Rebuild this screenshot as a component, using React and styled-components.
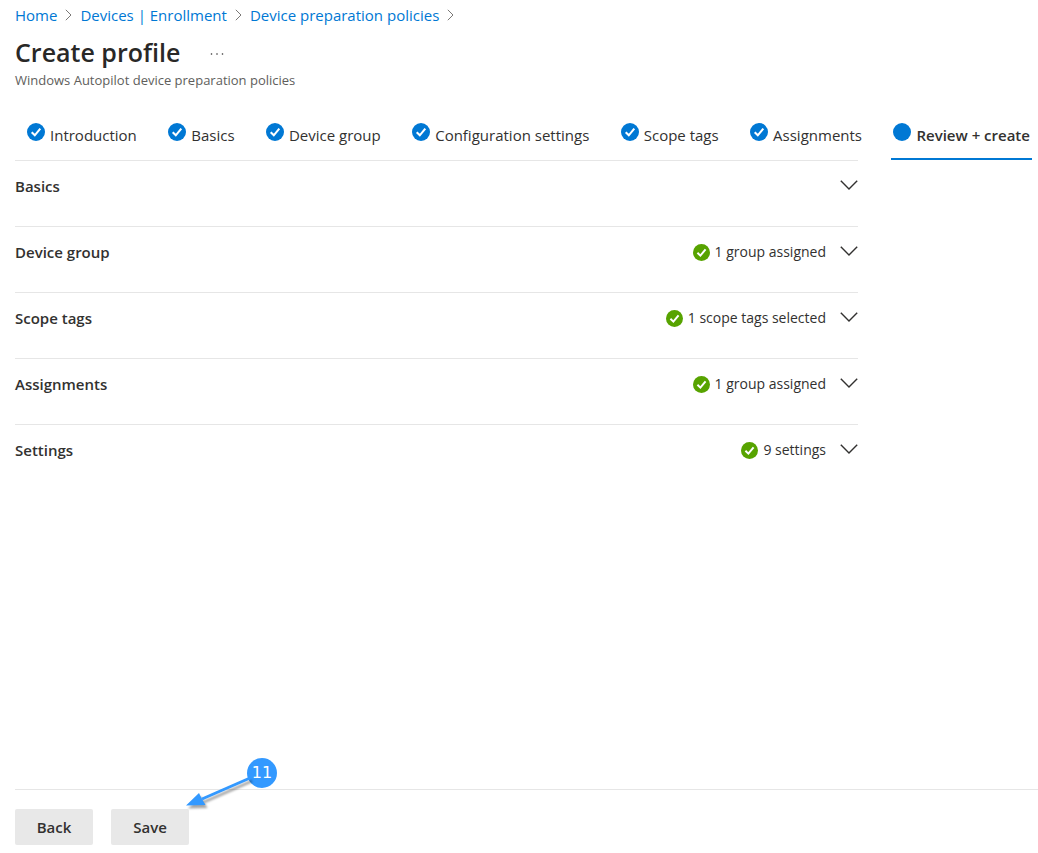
import { useState } from 'react';
import styled, { createGlobalStyle } from 'styled-components';

const crumbs = ['Home', 'Devices | Enrollment', 'Device preparation policies']

const steps = [
    'Introduction',
    'Basics',
    'Device group',
    'Configuration settings',
    'Scope tags',
    'Assignments',
    'Review + create',
]

const summary = [
    { title: 'Basics' },
    { title: 'Device group', status: '1 group assigned' },
    { title: 'Scope tags', status: '1 scope tags selected' },
    { title: 'Assignments', status: '1 group assigned' },
    { title: 'Settings', status: '9 settings' },
]

const CheckCircle = ({ color, size, checked = true }) => (
    <Icon width={size} height={size} viewBox="0 0 18 18" aria-hidden="true">
        <circle cx="9" cy="9" r="9" fill={color} />
        {checked && <path d="M4.7 9.3 L7.8 12.3 L13.3 5.6" fill="none" stroke="#fff" strokeWidth="2.1" />}
    </Icon>
)

const App = () => {
    const [step, setStep] = useState(steps.length - 1)
    const [opened, setOpened] = useState('')

    const toggle = (title) => {
        setOpened(opened === title ? '' : title)
    }

    return (
        <Page>
            <GlobalStyle />
            <Breadcrumb aria-label="Breadcrumb">
                {crumbs.map((crumb) => (
                    <Crumb key={crumb}>
                        <CrumbLink href="#">{crumb}</CrumbLink>
                        <Icon width="7" height="12" viewBox="0 0 7 12" aria-hidden="true">
                            <path d="M0.8 0.8 L6 6 L0.8 11.2" fill="none" stroke="#7a7876" />
                        </Icon>
                    </Crumb>
                ))}
            </Breadcrumb>
            <Header>
                <Title>Create profile</Title>
                <MoreButton type="button" aria-label="More">
                    <Icon width="14" height="4" viewBox="0 0 14 4" aria-hidden="true">
                        <circle cx="1.5" cy="2" r="0.8" fill="#323130" />
                        <circle cx="7" cy="2" r="0.8" fill="#323130" />
                        <circle cx="12.5" cy="2" r="0.8" fill="#323130" />
                    </Icon>
                </MoreButton>
            </Header>
            <Subtitle>Windows Autopilot device preparation policies</Subtitle>

            <Steps>
                {steps.map((name, index) => (
                    <Step key={name} type="button" $active={index === step} onClick={() => setStep(index)}>
                        <CheckCircle color="#0078d4" size="18" checked={index !== step} />
                        <StepName>{name}</StepName>
                    </Step>
                ))}
            </Steps>

            <Summary>
                {summary.map(({ title, status }) => (
                    <Row key={title}>
                        <RowTitle>{title}</RowTitle>
                        {status && (
                            <Status>
                                <CheckCircle color="#57a300" size="17" />
                                {status}
                            </Status>
                        )}
                        <Toggle
                            type="button"
                            aria-label={title}
                            aria-expanded={opened === title}
                            onClick={() => toggle(title)}
                        >
                            <Icon width="18" height="10" viewBox="0 0 18 10" aria-hidden="true">
                                <path d="M0.8 0.8 L9 9 L17.2 0.8" fill="none" stroke="#323130" strokeWidth="1.4" />
                            </Icon>
                        </Toggle>
                    </Row>
                ))}
            </Summary>

            <Footer>
                <Button type="button">Back</Button>
                <Button type="button">Save</Button>
                <Callout>
                    <Arrow width="72" height="40" viewBox="0 0 72 40" aria-hidden="true">
                        <path d="M64 4 L16 25" stroke="#3399ff" strokeWidth="3" />
                        <path d="M0 31.5 L13 19 L16 25 L19.500 31 Z" fill="#3399ff" />
                    </Arrow>
                    <Badge>11</Badge>
                </Callout>
            </Footer>
        </Page>
    );
};

export default App;

const GlobalStyle = createGlobalStyle`
  * {
    box-sizing: border-box;
  }
  body {
    margin: 0;
    background: #fff;
    color: #323130;
    font-family: "Open Sans", "Noto Sans", sans-serif;
    font-size: 15px;
    line-height: 20px;
  }
  button {
    border: none;
    color: inherit;
    font: inherit;
    cursor: pointer;
  }
`
const Page = styled.div`
  display: flex;
  flex-direction: column;
  min-height: 100vh;
  padding: 5px 0 0 15px;
`
const Icon = styled.svg`
  display: block;
  flex-shrink: 0;
`
const Breadcrumb = styled.nav`
  display: flex;
  gap: 8px;
`
const Crumb = styled.span`
  display: flex;
  align-items: center;
  gap: 8px;
`
const CrumbLink = styled.a`
  color: #0078d4;
  text-decoration: none;
  &:hover {
    text-decoration: underline;
  }
`
const Header = styled.header`
  display: flex;
  align-items: center;
  gap: 26px;
  margin-top: 10px;
`
const Title = styled.h1`
  margin: 0;
  color: #292827;
  font-size: 25px;
  font-weight: 600;
  line-height: 34px;
`
const MoreButton = styled.button`
  padding: 8px 4px 4px;
  background: none;
`
const Subtitle = styled.p`
  margin: 1px 0 0;
  color: #605e5c;
  font-size: 13px;
`
const Steps = styled.nav`
  display: flex;
  justify-content: space-between;
  margin: 30px 6px 0 10px;
`
const Step = styled.button`
  display: flex;
  gap: 5px;
  height: 40px;
  padding: 3px 2px 0;
  background: none;
  font-weight: ${(props) => (props.$active ? 600 : 400)};
  border-bottom: 2px solid ${(props) => (props.$active ? '#0078d4' : 'transparent')};
  white-space: nowrap;
`
const StepName = styled.span`
  padding-top: 2px;
`
const Summary = styled.main`
  flex: 1;
  margin-right: 180px;
`
const Row = styled.section`
  display: flex;
  align-items: flex-start;
  min-height: 66px;
  padding-top: 15px;
  border-top: 1px solid #e6e6e6;
`
const RowTitle = styled.h2`
  flex: 1;
  margin: 0;
  font-size: 15px;
  font-weight: 600;
`
const Status = styled.span`
  display: flex;
  align-items: center;
  gap: 5px;
  font-size: 14px;
`
const Toggle = styled.button`
  margin-left: 14px;
  padding: 4px 0;
  background: none;
`
const Footer = styled.footer`
  position: relative;
  display: flex;
  gap: 18px;
  padding: 19px 0 8px;
  border-top: 1px solid #e6e6e6;
`
const Button = styled.button`
  width: 78px;
  height: 36px;
  background: #e8e8e8;
  border-radius: 2px;
  font-weight: 600;
  &:hover {
    background: #dcdcdc;
  }
`
const Callout = styled.div`
  position: absolute;
  top: -32px;
  left: 171px;
  display: flex;
`
const Arrow = styled.svg`
  margin-top: 16px;
  overflow: visible;
  filter: drop-shadow(2px 3px 1px rgba(0, 0, 0, 0.35));
`
const Badge = styled.span`
  width: 30px;
  height: 30px;
  margin-left: -11px;
  border-radius: 50%;
  background: #3399ff;
  color: #fff;
  font-family: "DejaVu Sans", sans-serif;
  font-size: 16px;
  line-height: 30px;
  text-align: center;
`
